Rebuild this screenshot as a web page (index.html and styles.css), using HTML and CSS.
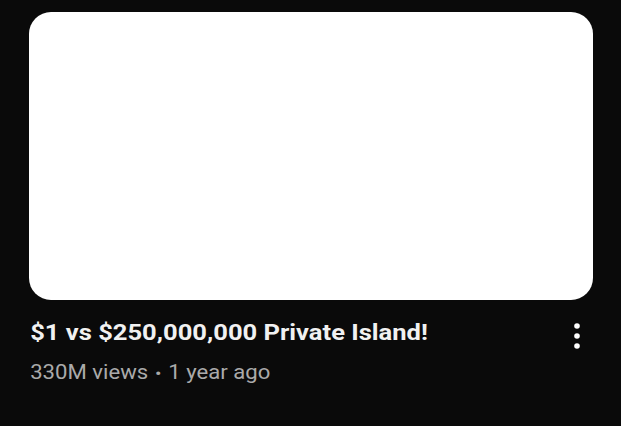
FILE: index.html
```html
<!DOCTYPE html>
<html>
<head>
<meta charset="utf-8">
<link rel="stylesheet" href="styles.css">
</head>
<body>
<div class="card">
  <div class="thumb"></div>
  <div class="details">
    <div class="text">
      <h3 class="title">$1 vs $250,000,000 Private Island!</h3>
      <div class="meta"><span>330M views</span><span class="sep">•</span><span>1 year ago</span></div>
    </div>
    <button class="more" aria-label="More">
      <svg width="12" height="30" viewBox="0 0 12 30"><circle cx="6" cy="5" r="2.8" fill="#fff"/><circle cx="6" cy="15" r="2.8" fill="#fff"/><circle cx="6" cy="25" r="2.8" fill="#fff"/></svg>
    </button>
  </div>
</div>
</body>
</html>
```
FILE: styles.css
```css
html, body { margin: 0; padding: 0; }
body {
  background: #0a0a0a;
  width: 621px;
  height: 426px;
  overflow: hidden;
  font-family: Roboto, "Liberation Sans", sans-serif;
}
.card {
  padding: 12px 0 0 29px;
  width: 564px;
}
.thumb {
  width: 564px;
  height: 288px;
  background: #fff;
  border-radius: 22px;
}
.details {
  display: flex;
  justify-content: space-between;
  align-items: flex-start;
  padding-top: 18px;
}
.text {
  padding-left: 1px;
  transform: scaleX(1.13);
  transform-origin: left top;
}
.title {
  margin: 0;
  color: #f1f1f1;
  font-size: 22.6px;
  font-weight: 700;
  line-height: 30px;
  white-space: nowrap;
}
.meta {
  margin-top: 13px;
  color: #aaa;
  font-size: 19.6px;
  line-height: 24px;
  display: flex;
  align-items: center;
  gap: 6px;
  white-space: nowrap;
}
.sep { font-size: 17px; }
.more {
  background: none;
  border: 0;
  padding: 0;
  margin: 3px 10px 0 0;
  width: 12px;
  height: 30px;
  display: block;
}
.more svg { display: block; }
```
